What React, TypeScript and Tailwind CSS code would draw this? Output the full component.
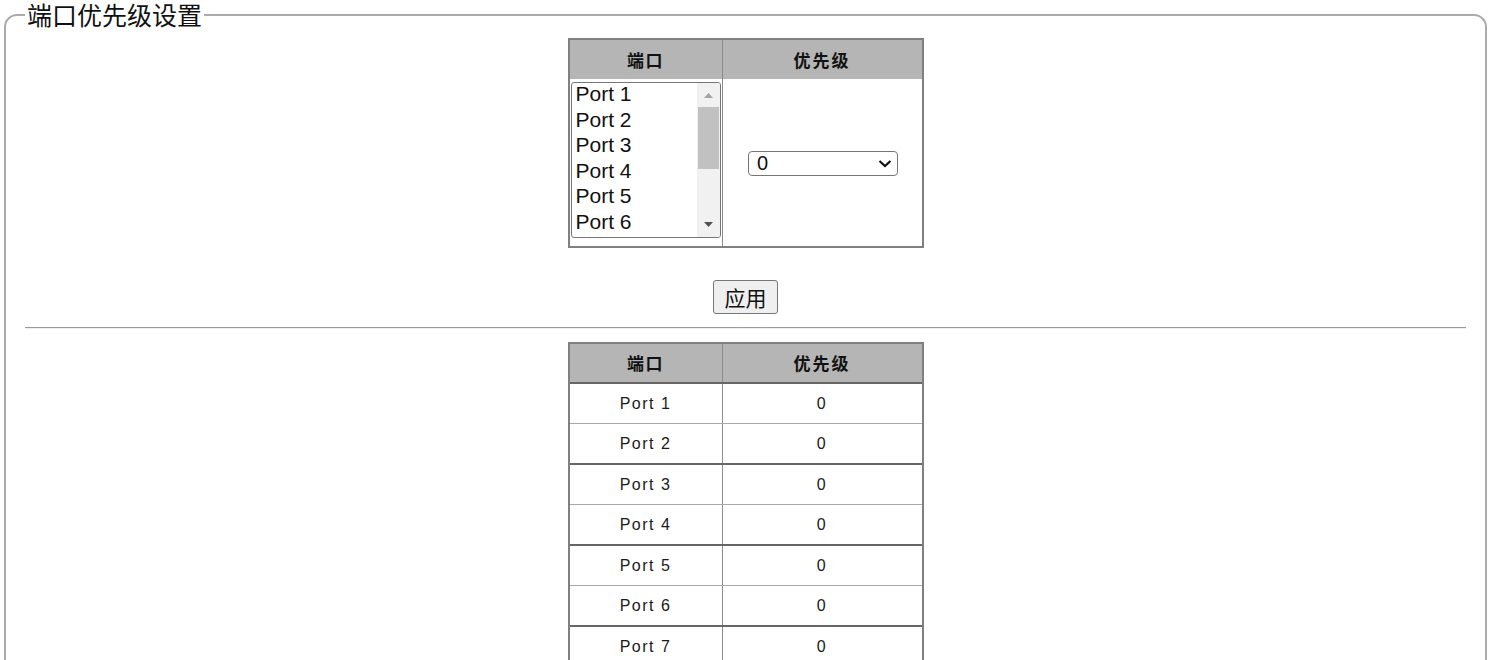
import React from "react";

const ports = Array.from({ length: 10 }, (_, i) => `Port ${i + 1}`);

function ListBox() {
  return (
    <div className="flex h-[156px] w-[150px] overflow-hidden rounded-[3px] border border-[#767676] bg-white">
      <div className="-mt-[1px] flex-1 overflow-hidden pl-[4px]">
        {ports.slice(0, 6).map((p) => (
          <div key={p} className="h-[25.6px] text-[21px] leading-[24px] text-[#111]">
            {p}
          </div>
        ))}
      </div>
      <div className="flex w-[23px] flex-col bg-[#f1f1f1]">
        <div className="flex h-[24px] items-center justify-center pt-[1px]">
          <svg width="9" height="5" viewBox="0 0 9 5">
            <polygon points="0,5 9,5 4.5,0" fill="#a3a3a3" />
          </svg>
        </div>
        <div className="mx-[1px] h-[62px] bg-[#c1c1c1]" />
        <div className="flex-1" />
        <div className="flex h-[24px] items-center justify-center pb-[2px]">
          <svg width="9" height="5" viewBox="0 0 9 5">
            <polygon points="0,0 9,0 4.5,5" fill="#505050" />
          </svg>
        </div>
      </div>
    </div>
  );
}

function Select() {
  return (
    <div className="relative h-[25px] w-[150px]">
      <select
        defaultValue="0"
        className="h-[25px] w-[150px] appearance-none rounded-[4px] border border-[#767676] bg-white pl-[8px] text-[20px] leading-[23px] text-[#111] outline-none"
      >
        {Array.from({ length: 8 }, (_, i) => (
          <option key={i} value={String(i)}>
            {i}
          </option>
        ))}
      </select>
      <svg
        className="pointer-events-none absolute right-[6px] top-[8px]"
        width="14"
        height="9"
        viewBox="0 0 14 9"
      >
        <polyline points="1.5,2 7,7 12.5,2" fill="none" stroke="#111" strokeWidth="2.2" />
      </svg>
    </div>
  );
}

function HeaderCells() {
  return (
    <>
      <div className="flex w-[153px] items-center justify-center border-r border-[#8c8c8c] font-['Noto_Sans_CJK_SC',sans-serif] text-[17px] font-bold tracking-[1.5px] text-[#111]">
        端口
      </div>
      <div className="flex flex-1 items-center justify-center font-['Noto_Sans_CJK_SC',sans-serif] text-[17px] font-bold tracking-[2px] text-[#111]">
        优先级
      </div>
    </>
  );
}

export default function App() {
  return (
    <div className="min-h-screen bg-white font-['Liberation_Sans','Noto_Sans_CJK_SC',sans-serif] text-black">
      <fieldset className="ml-[4px] mr-[5px] rounded-[13px] border-2 border-[#ababab] px-[19px] pb-[20px] pt-0">
        <legend className="px-[2px] font-['Noto_Sans_CJK_SC',sans-serif] text-[25px] leading-[29px] text-[#111]">
          端口优先级设置
        </legend>

        {/* settings table */}
        <div className="mx-auto mt-[9px] w-[356px] border-2 border-[#808080]">
          <div className="flex h-[39px] bg-[#b5b5b5]">
            <HeaderCells />
          </div>
          <div className="flex h-[167px]">
            <div className="w-[153px] border-r border-[#8c8c8c] pl-[1px] pt-[3px]">
              <ListBox />
            </div>
            <div className="flex flex-1 items-center justify-center pl-[2px] pt-[1px]">
              <Select />
            </div>
          </div>
        </div>

        <div className="mt-[32px] flex justify-center">
          <button className="h-[34px] w-[65px] rounded-[3px] border border-[#767676] bg-[#efefef] font-['Noto_Sans_CJK_SC',sans-serif] text-[21px] leading-[28px] text-[#111]">
            应用
          </button>
        </div>

        <div className="mt-[13px] h-0 border-b border-t border-b-[#eeeeee] border-t-[#9a9a9a]" />

        {/* status table */}
        <div className="mx-auto mt-[13px] w-[356px] border-x-2 border-t-2 border-[#808080]">
          <div className="flex h-[40px] border-b-2 border-[#666666] bg-[#b5b5b5]">
            <HeaderCells />
          </div>
          {ports.map((p, i) => (
            <div
              key={p}
              className={
                i % 2 === 0
                  ? "flex h-[40px] border-b border-[#a8a8a8] text-[16px] tracking-[1.5px] text-[#1a1a1a]"
                  : "flex h-[41px] border-b-2 border-[#666666] text-[16px] tracking-[1.5px] text-[#1a1a1a]"
              }
            >
              <div className="flex w-[153px] items-center justify-center border-r border-[#8c8c8c]">{p}</div>
              <div className="flex flex-1 items-center justify-center">0</div>
            </div>
          ))}
        </div>
      </fieldset>
    </div>
  );
}
